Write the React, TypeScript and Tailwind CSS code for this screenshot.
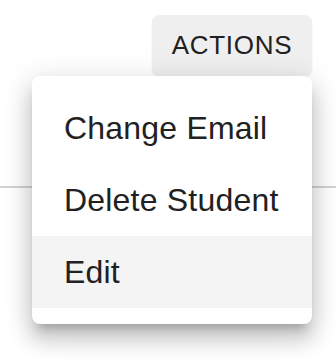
const items = ["Change Email", "Delete Student", "Edit"];

export default function App() {
  return (
    <div
      className="relative h-[360px] w-[336px] overflow-hidden bg-white text-[#212121]"
      style={{ fontFamily: '"Liberation Sans", Arial, sans-serif' }}
    >
      <div className="flex justify-end pr-[24px] pt-[15px]">
        <button className="flex h-[61px] w-[160px] items-center justify-center rounded-[8px] bg-[#efefef] text-[26px] uppercase tracking-[0.74px] shadow-[0_1px_2px_rgba(0,0,0,0.08)]">
          Actions
        </button>
      </div>
      <div className="mt-[110px] h-[2px] bg-[#d2d2d2]" />

      {/* Dropdown menu */}
      <ul className="absolute left-[32px] top-[76px] w-[280px] rounded-[8px] bg-white py-[16px] shadow-[0_10px_10px_-6px_rgba(0,0,0,0.2),0_16px_20px_2px_rgba(0,0,0,0.14),0_6px_28px_4px_rgba(0,0,0,0.12)]">
        {items.map((item) => (
          <li
            key={item}
            className={`flex h-[72px] items-center px-[32px] text-[32px] tracking-[0.2px] ${
              item === "Edit" ? "bg-[#f4f4f4]" : ""
            }`}
          >
            {item}
          </li>
        ))}
      </ul>
    </div>
  );
}
